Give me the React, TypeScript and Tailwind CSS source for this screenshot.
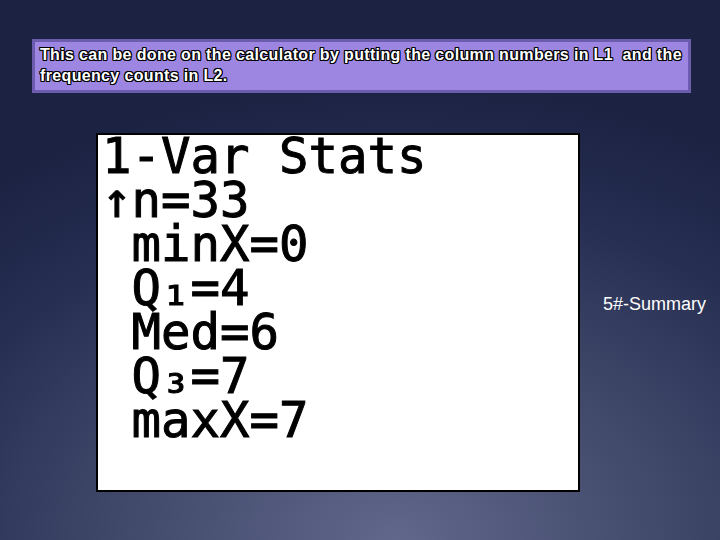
import React from "react";

export default function App() {
  const lines = ["1-Var Stats", "↑n=33", " minX=0", " Q₁=4", " Med=6", " Q₃=7", " maxX=7"];
  return (
    <div className="w-[720px] h-[540px] overflow-hidden bg-[radial-gradient(ellipse_90%_85%_at_55%_100%,#60678a_0%,#3f4769_45%,#262e52_75%,#1b2242_100%)] pt-[39px]">
      <div className="ml-[32px] w-[659px] h-[54px] border-[3px] border-[#6b5cae] bg-[#9c86e2] pl-[5px] pt-[2px]">
        <p className="font-['Liberation_Sans',Arial,sans-serif] font-bold text-[16px] tracking-[0.35px] leading-[21px] text-white whitespace-pre [text-shadow:1px_0_0_#000,-1px_0_0_#000,0_1px_0_#000,0_-1px_0_#000,1px_1px_0_#000,-1px_-1px_0_#000,1px_-1px_0_#000,-1px_1px_0_#000]">
          {"This can be done on the calculator by putting the column numbers in L1  and the"}
          <br />
          {"frequency counts in L2."}
        </p>
      </div>
      <div className="flex items-center mt-[40px]">
        <div className="ml-[96px] w-[484px] h-[359px] border-[2px] border-black bg-white pl-[4px] pt-0">
          {lines.map((l, i) => (
            <div
              key={i}
              className="font-['DejaVu_Sans_Mono',monospace] text-[49px] leading-[44px] text-black whitespace-pre [-webkit-text-stroke:1px_#000]"
            >
              {l}
            </div>
          ))}
        </div>
        <div className="ml-[23px] mb-[17px] font-['Liberation_Sans',Arial,sans-serif] text-[18px] text-white">
          5#-Summary
        </div>
      </div>
    </div>
  );
}
